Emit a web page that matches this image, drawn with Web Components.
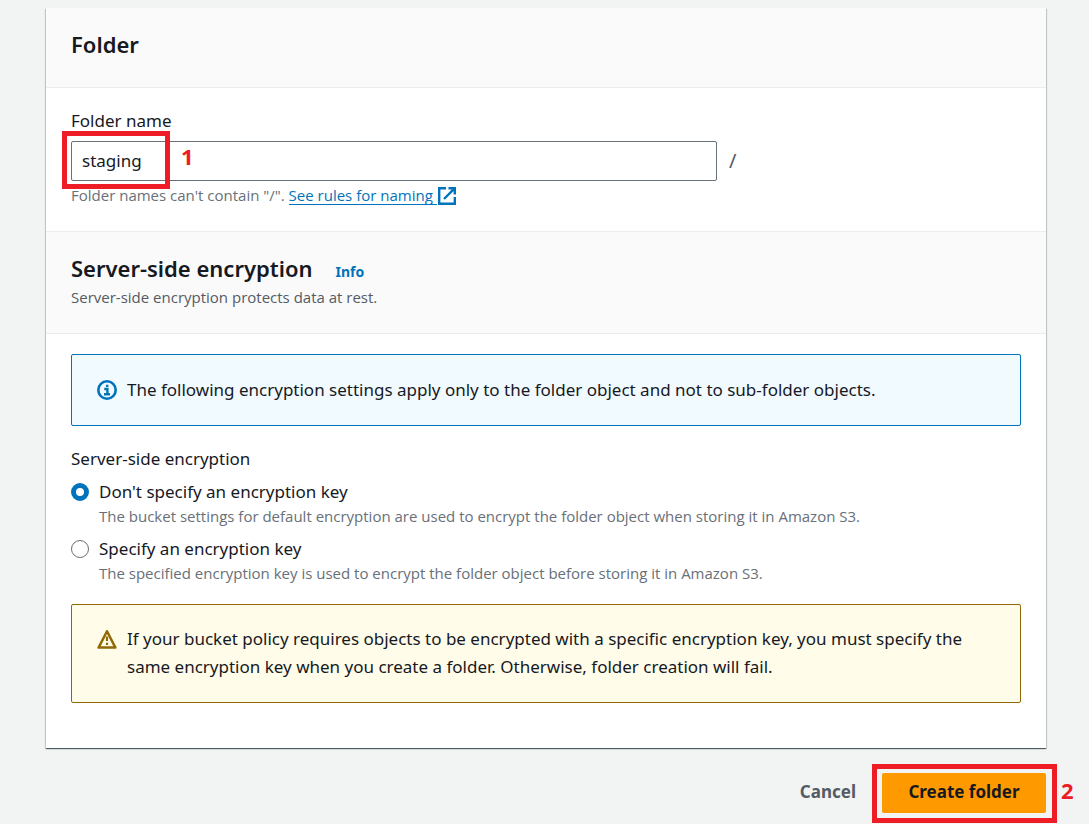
<!DOCTYPE html>
<html lang="en">
<head>
<meta charset="utf-8">
<meta name="viewport" content="width=device-width, initial-scale=1">
<title>Create folder</title>
<style>
  body {
    margin: 0;
    background: #f2f3f3;
    color: #16191f;
    font: 17px/28px "Noto Sans", "Open Sans", sans-serif;
    --blue: #0073bb;
    --muted: #687078;
    --grey: #545b64;
    --line: #eaeded;
    --red: #ee1c25;
    --note: 15px/24px "Open Sans", "Noto Sans", sans-serif;
  }
</style>
</head>
<body>
<create-folder-page></create-folder-page>

<script>
  const define = (name, html, setup) => {
    const template = document.createElement('template');
    template.innerHTML = html;
    customElements.define(name, class extends HTMLElement {
      constructor() {
        super();
        this.attachShadow({ mode: 'open' }).append(template.content.cloneNode(true));
      }
      connectedCallback() { if (setup) setup(this, this.shadowRoot); }
    });
  };

  define('section-header', `
    <style>
      :host { display: block; box-sizing: border-box; min-height: 80px; padding: 22px 25px 24px;
        background: #fafafa; border-bottom: 1px solid var(--line); }
      .row { display: flex; align-items: baseline; gap: 23px; }
      h2 { margin: 0; font-size: 22px; line-height: 28px; font-weight: 600; }
      .description { font: var(--note); padding-top: 3px; color: var(--grey); }
    </style>
    <div class="row"><h2><slot></slot></h2><slot name="info"></slot></div>
    <div class="description"><slot name="description"></slot></div>
  `);

  define('info-link', `
    <style>
      :host { display: block; font-size: 14px; line-height: 20px; }
      a { color: var(--blue); font-weight: 700; text-decoration: none; }
    </style>
    <a href="#info"><slot></slot></a>
  `);

  define('external-link', `
    <style>
      :host { display: inline-flex; }
      a { display: inline-flex; align-items: center; gap: 1px; color: var(--blue); text-decoration: none; }
      span { line-height: 18px; padding-right: 4px; border-bottom: 1px solid var(--blue); }
      svg { width: 18px; height: 18px; }
    </style>
    <a href="#naming-rules"><span><slot></slot></span>
      <svg viewBox="0 0 18 18" fill="none" stroke="currentColor" stroke-width="2.4" aria-hidden="true">
        <path d="M8 1.2H1.2v15.6h15.6V10M10.5 1.2h6.3v6.3M16.8 1.2L6 12"/>
      </svg></a>
  `);

  define('call-out', `
    <style>
      :host { position: absolute; box-sizing: border-box; border: 5px solid var(--red); pointer-events: none; }
      b { position: absolute; left: 100%; top: 42%; transform: translateY(-50%); color: var(--red); font-size: 22px; line-height: 24px; }
    </style>
    <b><slot></slot></b>
  `);

  define('name-field', `
    <style>
      :host { display: block; font-size: 17px; }
      label { display: block; line-height: 28px; margin-bottom: 6px; }
      .row { display: flex; align-items: center; gap: 12px; color: var(--grey); }
      .box { position: relative; flex: 0 1 68%; display: flex; }
      input { box-sizing: border-box; width: 100%; height: 40px; padding: 0 10px 2px; border: 1px solid var(--muted);
        border-radius: 2px; background: #fff; color: #16191f; font: inherit; outline: 0; }
      .slash { font-size: 20px; }
      call-out { left: -9px; top: -10px; width: 108px; height: 58px; }
      call-out span { margin-left: 16px; }
      .hint { margin-top: 2px; font: var(--note); color: var(--muted); }
    </style>
    <label for="name">Folder name</label>
    <div class="row">
      <div class="box"><input id="name" type="text" value="staging"><call-out><span>1</span></call-out></div>
      <span class="slash">/</span>
    </div>
    <div class="hint">Folder names can't contain "/". <external-link>See rules for naming</external-link></div>
  `);

  const alertIcons = {
    info: `<circle cx="10" cy="10" r="8.7" stroke-width="2.6"/><path d="M7.3 9H10.4v5M7 14.2h6M9 5.9h2.4" stroke-width="2.4"/>`,
    warning: `<path d="M10 2.2L1.6 18.6h16.8z" stroke-width="2.5" stroke-linejoin="round"/><path d="M10 7.5v4.6M10 13.8v2.2" stroke-width="2.2"/>`
  };

  define('alert-box', `
    <style>
      :host { display: flex; align-items: flex-start; gap: 10px; padding: 21px 25px;
        border: 1px solid var(--blue); border-radius: 2px; background: #f1faff; --icon: var(--blue); }
      :host([type="warning"]) { padding-top: 20px; border-color: #906806; background: #fffce9; --icon: #906806; }
      svg { flex: none; width: 20px; height: 20px; margin-top: 4px; stroke: var(--icon); fill: none; }
      div { flex: 1; }
    </style>
    <svg viewBox="0 0 20 20" aria-hidden="true"></svg>
    <div><slot></slot></div>
  `, (host, root) => { root.querySelector('svg').innerHTML = alertIcons[host.getAttribute('type')]; });

  define('encryption-choice', `
    <style>
      :host { display: block; }
      fieldset { margin: 0; padding: 0; border: 0; }
      legend { padding: 0; line-height: 28px; margin-bottom: 5px; }
      .option { display: grid; grid-template-columns: 18px 1fr; column-gap: 10px; align-items: center; margin-bottom: 9px; }
      input { appearance: none; box-sizing: border-box; width: 18px; height: 18px; margin: 0;
        border: 1px solid var(--muted); border-radius: 50%; background: #fff; }
      input:checked { border: 5px solid var(--blue); }
      label { line-height: 28px; }
      p { grid-column: 2; margin: 0; font: var(--note); line-height: 20px; color: var(--muted); }
    </style>
    <fieldset>
      <legend>Server-side encryption</legend>
      <div class="option">
        <input type="radio" name="key" id="default" aria-describedby="default-note" checked>
        <label for="default">Don't specify an encryption key</label>
        <p id="default-note">The bucket settings for default encryption are used to encrypt the folder object when storing it in Amazon S3.</p>
      </div>
      <div class="option">
        <input type="radio" name="key" id="custom" aria-describedby="custom-note">
        <label for="custom">Specify an encryption key</label>
        <p id="custom-note">The specified encryption key is used to encrypt the folder object before storing it in Amazon S3.</p>
      </div>
    </fieldset>
  `);

  define('form-actions', `
    <style>
      :host { display: flex; justify-content: flex-end; gap: 26px; padding: 25px 0 11px; }
      button { height: 40px; padding: 0 0 2px; border: 0; border-radius: 2px; background: none; color: var(--grey);
        font: inherit; font-weight: 700; white-space: nowrap; }
      .primary { width: 164px; background: #f90; color: #16191f; }
      .box { position: relative; display: flex; }
      call-out { inset: -9px -11px -10px -10px; }
      call-out span { margin-left: 9px; }
    </style>
    <button type="button">Cancel</button>
    <div class="box"><button class="primary" type="submit">Create folder</button><call-out><span>2</span></call-out></div>
  `);

  define('create-folder-page', `
    <style>
      :host { display: block; padding: 8px 43px 0 46px; }
      main { background: #fff; box-shadow: 0 1px 1px #001c2466, 1px 1px 1px #001c2426, -1px 1px 1px #001c2426, 0 1px 0 #aab7b8; }
      .folder { padding: 19px 25px 24px; border-bottom: 1px solid var(--line); }
      .encryption { display: flex; flex-direction: column; padding: 20px 25px 45px; }
      encryption-choice { margin: 19px 0 12px; }
    </style>
    <main>
      <section-header>Folder</section-header>
      <section class="folder"><name-field></name-field></section>
      <section-header>Server-side encryption<info-link slot="info">Info</info-link><span slot="description">Server-side encryption protects data at rest.</span></section-header>
      <section class="encryption">
        <alert-box type="info">The following encryption settings apply only to the folder object and not to sub-folder objects.</alert-box>
        <encryption-choice></encryption-choice>
        <alert-box type="warning">If your bucket policy requires objects to be encrypted with a specific encryption key, you must specify the same encryption key when you create a folder. Otherwise, folder creation will fail.</alert-box>
      </section>
    </main>
    <form-actions></form-actions>
  `);
</script>
</body>
</html>
